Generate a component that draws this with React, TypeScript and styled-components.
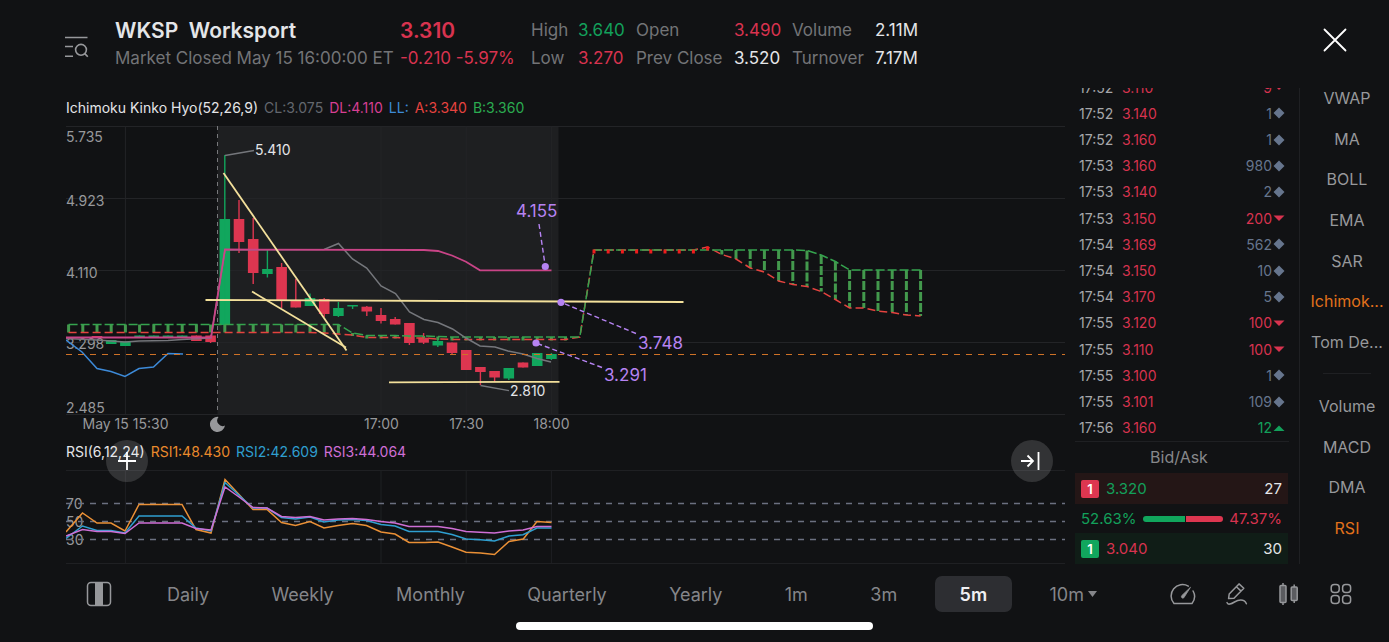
import React from "react";
import styled, { createGlobalStyle } from "styled-components";

const color = {
  bg: "#111214",
  text: "#e4e5e8",
  muted: "#737477",
  axis: "#97989b",
  red: "#d8334f",
  green: "#13a05b",
  slate: "#66758d",
  orange: "#e2711b",
  line: "#1f2023",
  purple: "#b683f2",
  yellow: "#f3e09b",
};

const GlobalStyle = createGlobalStyle`
  * { box-sizing: border-box; }
  body {
    margin: 0;
    background: ${color.bg};
    color: ${color.text};
    font-family: Inter, "Liberation Sans", sans-serif;
  }
  button {
    font: inherit;
    color: inherit;
    background: none;
    border: 0;
    padding: 0;
    cursor: pointer;
  }
  svg { display: block; }
`;

const Page = styled.div`
  min-height: 100vh;
  display: grid;
  grid-template-rows: 88px auto 1fr;
`;

/* Header */

const Header = styled.header`
  display: flex;
  align-items: flex-start;
  padding: 16px 42px 0 64px;
`;

const IconButton = styled.button<{ $top?: number }>`
  display: grid;
  place-items: center;
  margin-top: ${(p) => p.$top ?? 0}px;
`;

const Identity = styled.div`
  display: grid;
  grid-template-columns: 277px 122px;
  grid-template-rows: 28px 28px;
  column-gap: 8px;
  align-items: center;
  margin-left: 25px;
  white-space: pre;
`;

const Title = styled.h1`
  margin: 0;
  font-size: 21px;
  font-weight: 600;
`;

const Price = styled.strong`
  font-size: 21px;
  font-weight: 600;
  color: ${color.red};
`;

const Sub = styled.span<{ $color?: string }>`
  font-size: 17px;
  color: ${(p) => p.$color ?? color.muted};
`;

const Stats = styled.dl`
  display: grid;
  grid-template-columns: 47px 58px 98px 58px 83px auto;
  grid-template-rows: 28px 28px;
  align-items: center;
  margin: 0 auto 0 9px;
  font-size: 17px;
  white-space: nowrap;
`;

const Stat = styled.div`
  display: contents;
`;

const StatName = styled.dt`
  color: ${color.muted};
`;

const StatValue = styled.dd<{ $color?: string }>`
  margin: 0;
  color: ${(p) => p.$color ?? color.text};
`;

/* Body */

const Body = styled.main`
  display: grid;
  grid-template-columns: minmax(0, 1fr) 214px 90px;
  column-gap: 10px;
  height: 476px;
  padding-left: 66px;
`;

const Charts = styled.section`
  display: flex;
  flex-direction: column;
  min-width: 0;
`;

const Legend = styled.div<{ $height: number }>`
  display: flex;
  align-items: center;
  gap: 6px;
  height: ${(p) => p.$height}px;
  font-size: 14px;
  white-space: nowrap;
`;

const Tint = styled.span<{ $color?: string }>`
  color: ${(p) => p.$color ?? color.text};
`;

const Plot = styled.svg<{ $height: number }>`
  width: 100%;
  height: ${(p) => p.$height}px;
  font-size: 14px;
`;

const RsiPanel = styled.section`
  position: relative;
`;

const RoundButton = styled.button<{ $side: "left" | "right" }>`
  position: absolute;
  top: 2px;
  ${(p) => (p.$side === "left" ? "left: 40px;" : "right: 12px;")}
  width: 42px;
  height: 42px;
  border-radius: 50%;
  background: rgba(255, 255, 255, 0.14);
  display: grid;
  place-items: center;
`;

/* Trades */

const Trades = styled.section`
  display: flex;
  flex-direction: column;
  min-width: 0;
  font-size: 14px;
`;

const Tape = styled.div`
  height: 354px;
  overflow: hidden;
  display: flex;
  flex-direction: column;
  justify-content: flex-end;
  border-bottom: 1px solid ${color.line};
`;

const TapeTable = styled.table`
  flex: none;
  width: 100%;
  height: 367px;
  border-collapse: collapse;

  td { padding: 0; }
`;

const TimeCell = styled.td`
  width: 47px;
  color: #a6a7aa;
  && { padding-left: 4px; }
`;

const PriceCell = styled.td`
  color: ${color.red};
`;

const SizeCell = styled.td<{ $color: string }>`
  color: ${(p) => p.$color};
  && { padding-right: 4px; }
`;

const Size = styled.span`
  display: flex;
  align-items: center;
  justify-content: flex-end;
  gap: 1px;
`;

const BookTitle = styled.h2`
  margin: 0;
  padding-right: 6px;
  height: 31px;
  line-height: 31px;
  text-align: center;
  font-size: 16px;
  font-weight: 400;
  color: #87888b;
`;

const Quote = styled.div<{ $bg: string }>`
  display: flex;
  align-items: center;
  gap: 7px;
  height: 31px;
  margin-right: 1px;
  padding: 0 6px;
  background: ${(p) => p.$bg};
  font-size: 15px;
`;

const Level = styled.span<{ $bg: string }>`
  width: 18px;
  height: 18px;
  line-height: 18px;
  border-radius: 2px;
  text-align: center;
  font-size: 13px;
  font-weight: 600;
  color: #fff;
  background: ${(p) => p.$bg};
`;

const Amount = styled.span`
  margin-left: auto;
`;

const Ratio = styled.div`
  display: flex;
  align-items: center;
  justify-content: space-between;
  gap: 6px;
  height: 29px;
  padding: 0 7px 0 6px;
  font-size: 15px;
`;

const Meter = styled.div`
  flex: 1;
  display: flex;
  gap: 1px;
  height: 6px;
  border-radius: 3px;
  overflow: hidden;
`;

const Share = styled.span<{ $bg: string }>`
  background: ${(p) => p.$bg};
`;

/* Indicators */

const Indicators = styled.nav`
  border-left: 1px solid ${color.line};
  padding-left: 5px;
`;

const IndicatorGroup = styled.div<{ $height: number }>`
  display: flex;
  flex-direction: column;
  height: ${(p) => p.$height}px;
`;

const FirstGroup = styled(IndicatorGroup)`
  margin-top: -10px;
`;

const Indicator = styled.button<{ $active?: boolean }>`
  flex: 1;
  font-size: 16px;
  color: ${(p) => (p.$active ? color.orange : "#97989b")};
`;

const Divider = styled.hr`
  width: 48px;
  margin: 11px auto 12px;
  border: 0;
  border-top: 1px solid ${color.line};
`;

/* Footer */

const Footer = styled.footer`
  display: grid;
  grid-template-rows: 60px 8px;
  color: #85868a;
`;

const Toolbar = styled.div`
  display: flex;
  align-items: center;
  padding: 0 36px 0 86px;
`;

const Ranges = styled.div`
  flex: 1;
  display: flex;
  justify-content: space-between;
  margin: 0 48px 0 30px;
`;

const Range = styled.button<{ $active?: boolean }>`
  display: flex;
  align-items: center;
  gap: 4px;
  height: 36px;
  padding: 0 25px;
  border-radius: 7px;
  font-size: 18px;
  font-weight: ${(p) => (p.$active ? 600 : 400)};
  color: ${(p) => (p.$active ? "#f0f0f2" : "inherit")};
  background: ${(p) => (p.$active ? "#2d2e32" : "none")};
`;

const Tools = styled.div`
  display: flex;
  align-items: center;
  gap: 29px;
`;

const HomeBar = styled.div`
  width: 357px;
  height: 8px;
  margin: -2px auto 0;
  border-radius: 4px;
  background: #fff;
`;

/* Chart data: plot coordinates, with bars 14.2 units apart */

const STEP = 14.2;
const barX = (i: number) => 158.8 + STEP * i;

type Candle = [bar: number, up: boolean, top: number, bottom: number, high: number, low: number];

const candles: Candle[] = [
  [-9, false, 210, 212, 210, 212],
  [-8, true, 214, 218, 214, 218],
  [-7, true, 215.5, 220, 215.5, 220],
  [-6, true, 209.5, 211, 209.5, 211],
  [-5, true, 209.5, 211, 209.5, 211],
  [-4, true, 209.5, 211, 209.5, 211],
  [-3, true, 209.5, 211, 209.5, 211],
  [-2, false, 209.5, 215, 209.5, 215],
  [-1, false, 209.5, 216, 209, 217],
  [0, true, 93, 199, 29, 199],
  [1, false, 93, 116, 74, 127],
  [2, false, 113, 147, 92, 158],
  [3, true, 143, 148, 123.5, 151.5],
  [4, false, 141, 174, 137, 182],
  [5, false, 174, 181.5, 153, 181.5],
  [6, true, 172, 180, 167.5, 180],
  [7, false, 173, 188, 172, 191],
  [8, true, 182, 190, 176, 191],
  [9, true, 179, 180.5, 179, 183],
  [10, false, 180.7, 185.5, 180, 190],
  [11, false, 189, 195, 182, 197.5],
  [12, false, 193, 198.5, 191, 198.5],
  [13, false, 197, 217, 197, 219],
  [14, false, 211.7, 216.7, 207, 218],
  [15, true, 215, 219.5, 214, 221],
  [16, false, 216.5, 227, 216.5, 228],
  [17, false, 224, 244, 224, 244],
  [18, false, 241, 246, 241, 259],
  [19, false, 245, 251.5, 245, 256],
  [20, true, 242, 252.5, 242, 254],
  [21, false, 236.5, 241.5, 236.5, 241.5],
  [22, true, 227, 240, 227, 240],
  [23, true, 228, 233, 227, 234],
];

/* Cloud spans per bar: [green edge, red edge] */
const cloud: [number, number][] = [
  ...Array.from({ length: 18 }, (): [number, number] => [198.5, 206.5]),
  [198.5, 207], [198.5, 208], [207, 209], [209.5, 211.5], [209.5, 211.5], [209.5, 211.5], [210, 212],
  [210, 212], [210.5, 213], [211, 213.5],
  ...Array.from({ length: 8 }, (): [number, number] => [211, 213.5]),
  [211, 211],
  ...Array.from({ length: 8 }, (): [number, number] => [124, 124]),
  [124, 121], [124, 128.5], [124, 133], [124, 142], [124, 146], [124, 155], [124, 158.5],
  [124.5, 160.5], [129, 165.5], [135.5, 173.5], [144, 182], [144, 182], [144, 185], [144, 186.5],
  [144, 189], [144, 190],
];
const cloudBar = (n: number) => n - 11;
const edge = (side: 0 | 1) =>
  cloud.map((c, n) => `${Math.max(0, barX(cloudBar(n))).toFixed(1)},${c[side]}`).join(" ");

const series = {
  base: "0,212.5 31,214 59,216 73,215 102,214.5 116,213.5 145,212 159,124 258,123.5 272.5,117.5 286.5,133 300.7,142 315,160 329.5,167.5 343.5,186 358,193.5 372,196.5 386.5,203 400,212 414,220 429,221 442,225 457,228 471,232.5 485,236",
  conversion: "0,211.5 145,211.5 159,123.5 358,124 372,125 386,129.5 400,135.7 414,144.3 485.5,144.3",
  lagging: "0,214 16,226 31,242.5 45,245.5 59,250.5 73,242.5 87.5,241 102,227.5 117,228",
  rsi1: "0,68 16.5,49 31,59 45,59 59,67 73,40.5 116,40.5 130,65.5 145,69 159,15.5 187,45.5 201,45.5 215.5,58.5 229.5,61.5 244,57.5 258,64 272,61.5 286.5,59.5 300.5,61.5 315,68 329,70 343,78.5 359,78.5 372,78 386,83 400,88.3 414.5,89 428.5,90.5 443,77.5 457.3,75 471,57.5 485.5,58.5",
  rsi2: "0,74.5 16.5,62 31,66.5 45,66.5 59,69 73,52 116,52 130,64 145,67 159,18.5 187,44 201,44 215.5,53.5 229.5,55 244,53 258,58 272,56 286.5,55.5 300.5,56.5 315,60.5 329,62 343,67.5 372,67.5 386,70.5 400,75 414.5,75.7 428.5,77 443,72 457,70.7 471,64 485.5,64",
  rsi3: "0,72 16.5,65.5 31,67.5 45,67.5 59,69.5 73,59 116,59 130,64.5 145,66 159,23 173,33 187,43.5 201,44 215.5,52.5 229.5,53.5 244,52.5 258,56 272,55 286.5,54.5 300.5,55.5 315,57.5 329,59 343,62.5 372,62.5 386,64.5 400,67.5 414,68.3 428.5,69 443,67 457,66 471,62.5 485.5,62.5",
};

const gridX = [-7, 11, 17, 23].map(barX);

const priceTicks: [string, number][] = [
  ["5.735", 16], ["4.923", 80], ["4.110", 152], ["3.298", 223], ["2.485", 287],
];

const timeTicks: [string, number][] = [
  ["May 15 15:30", 59.5], ["17:00", 315.5], ["17:30", 400.5], ["18:00", 485.5],
];

const callouts: { label: string; x: number; y: number; dot: [number, number]; from: [number, number] }[] = [
  { label: "4.155", x: 450, y: 91, dot: [479.3, 140.5], from: [473, 98] },
  { label: "3.748", x: 572, y: 223, dot: [495, 176.3], from: [570, 207.5] },
  { label: "3.291", x: 538, y: 255, dot: [470, 217], from: [536, 241.5] },
];

const trendLines: [number, number, number, number][] = [
  [157.5, 47, 280.5, 224.5],
  [186, 165.5, 280, 221.5],
  [139.5, 174, 617.5, 176],
  [323, 256.3, 493.5, 255.8],
];

function PriceChart() {
  return (
    <Plot $height={312} role="img" aria-label="Five minute price chart">
      <rect x="151.5" y="0" width="341" height="288.5" fill="#1e1f21" />
      <g stroke="#232427">
        {[0.5, 72.5, 144.5, 216.5, 288.5].map((y) => (
          <line key={y} x1="0" x2="100%" y1={y} y2={y} />
        ))}
        {gridX.map((x) => (
          <line key={x} x1={x} x2={x} y1="0" y2="288" />
        ))}
      </g>
      <line x1="151.5" x2="151.5" y1="0" y2="288" stroke="#77787b" strokeDasharray="4 4" />

      {candles.map(([i, up, top, bottom, high, low]) => (
        <g key={i} fill={up ? "#11a65d" : "#dd3650"}>
          <rect x={barX(i) - 5.3} y={top} width="10.6" height={bottom - top} />
          <rect x={barX(i) - 0.7} y={high} width="1.4" height={low - high} />
        </g>
      ))}

      <g fill={color.axis}>
        {priceTicks.map(([t, y]) => (
          <text key={t} x="0" y={y}>{t}</text>
        ))}
        {timeTicks.map(([t, x]) => (
          <text key={t} x={x} y="303" textAnchor="middle">{t}</text>
        ))}
      </g>
      <path d="M152.5 290.9A7.6 7.6 0 1 0 159 299.6A5.6 5.6 0 0 1 152.5 290.9z" fill="#97989b" />

      <g fill="none" strokeWidth="1.5">
        {cloud.map(([a, b], n) =>
          b - a > 1 ? (
            <line
              key={n}
              x1={barX(cloudBar(n))}
              x2={barX(cloudBar(n))}
              y1={a}
              y2={b + (b - a < 4 ? 1 : 0)}
              stroke="#43994d"
              strokeWidth="3"
              strokeDasharray="9 2"
            />
          ) : null,
        )}
        <polyline points={edge(1)} stroke="#e5433f" strokeDasharray="8 4" />
        <polyline points={edge(0)} stroke="#35a34e" strokeDasharray="9 3" />
        {Array.from({ length: 9 }, (_, k) => (
          <line
            key={k}
            x1={barX(26 + k)}
            x2={barX(26 + k)}
            y1={k === 8 ? 120.5 : 123.5}
            y2={k === 8 ? 124.5 : 127.5}
            stroke="#ee1d1d"
            strokeWidth="3"
          />
        ))}
        <polyline points={series.base} stroke="#75777c" />
        <polyline points={series.conversion} stroke="#c94487" strokeWidth="1.8" />
        <polyline points={series.lagging} stroke="#3d8ad8" />
      </g>
      <line x1="0" x2="100%" y1="228.5" y2="228.5" stroke="#cf7227" strokeDasharray="6 6" />

      <g stroke={color.yellow} strokeWidth="1.8">
        {trendLines.map(([x1, y1, x2, y2]) => (
          <line key={x1} x1={x1} y1={y1} x2={x2} y2={y2} />
        ))}
      </g>

      <g fill="none" stroke="#75777c" strokeWidth="1.3">
        <path d="M159 29.5 L188 24.5" />
        <path d="M414.5 259.5 L443 264.7" />
      </g>
      <g fill={color.text}>
        <text x="189" y="29">5.410</text>
        <text x="444" y="270">2.810</text>
      </g>

      {callouts.map(({ label, x, y, dot, from }) => (
        <g key={label} fill={color.purple}>
          <line
            x1={from[0]}
            y1={from[1]}
            x2={dot[0]}
            y2={dot[1]}
            stroke={color.purple}
            strokeWidth="1.4"
            strokeDasharray="5 3"
          />
          <circle cx={dot[0]} cy={dot[1]} r="3.6" />
          <text x={x} y={y} fontSize="17">{label}</text>
        </g>
      ))}
    </Plot>
  );
}

function RsiChart() {
  return (
    <Plot $height={100} role="img" aria-label="Relative strength index">
      <g stroke={color.line}>
        <line x1="0" x2="100%" y1="6.5" y2="6.5" />
        <line x1="0" x2="100%" y1="99.5" y2="99.5" />
        {gridX.map((x) => (
          <line key={x} x1={x} x2={x} y1="6" y2="99" />
        ))}
      </g>
      <g fill={color.axis}>
        <text x="0" y="45">70</text>
        <text x="0" y="63">50</text>
        <text x="0" y="81">30</text>
      </g>
      <g stroke="#6b7080" strokeWidth="1.3" strokeDasharray="6 6">
        {[39.5, 57.5, 75.5].map((y) => (
          <line key={y} x1="0" x2="100%" y1={y} y2={y} />
        ))}
      </g>
      <g fill="none" strokeWidth="1.5">
        <polyline points={series.rsi1} stroke="#ea9036" />
        <polyline points={series.rsi2} stroke="#2f9fd0" />
        <polyline points={series.rsi3} stroke="#cf6fd6" />
      </g>
    </Plot>
  );
}

type Mark = "even" | "down" | "up";
const markColor = { even: color.slate, down: color.red, up: color.green };
const markPath = {
  even: "M6 0.5 L11.5 6 L6 11.5 L0.5 6z",
  down: "M0.5 3.5 H11.5 L6 9z",
  up: "M0.5 9 H11.5 L6 3.5z",
};

const trades: [string, string, string, Mark][] = [
  ["17:52", "3.110", "9", "down"],
  ["17:52", "3.140", "1", "even"],
  ["17:52", "3.160", "1", "even"],
  ["17:53", "3.160", "980", "even"],
  ["17:53", "3.140", "2", "even"],
  ["17:53", "3.150", "200", "down"],
  ["17:54", "3.169", "562", "even"],
  ["17:54", "3.150", "10", "even"],
  ["17:54", "3.170", "5", "even"],
  ["17:55", "3.120", "100", "down"],
  ["17:55", "3.110", "100", "down"],
  ["17:55", "3.100", "1", "even"],
  ["17:55", "3.101", "109", "even"],
  ["17:56", "3.160", "12", "up"],
];

const stats: [string, string, string?][] = [
  ["High", "3.640", color.green],
  ["Open", "3.490", color.red],
  ["Volume", "2.11M"],
  ["Low", "3.270", color.red],
  ["Prev Close", "3.520"],
  ["Turnover", "7.17M"],
];

const ranges = ["Daily", "Weekly", "Monthly", "Quarterly", "Yearly", "1m", "3m", "5m", "10m"];

export default function App() {
  return (
    <Page>
      <GlobalStyle />
      <Header>
        <IconButton $top={20} aria-label="Search watchlist">
          <svg width="26" height="24" viewBox="0 0 26 24" fill="none" stroke="#97989b" strokeWidth="1.6">
            <path d="M1 1.5H23.5M1 10.5H9M1 20.3H9" />
            <circle cx="17" cy="13.8" r="5.4" />
            <path d="M20.8 17.6 L23.8 20.8" />
          </svg>
        </IconButton>
        <Identity>
          <Title>WKSP  Worksport</Title>
          <Price>3.310</Price>
          <Sub>Market Closed May 15 16:00:00 ET</Sub>
          <Sub $color={color.red}>-0.210 -5.97%</Sub>
        </Identity>
        <Stats>
          {stats.map(([name, value, tone]) => (
            <Stat key={name}>
              <StatName>{name}</StatName>
              <StatValue $color={tone}>{value}</StatValue>
            </Stat>
          ))}
        </Stats>
        <IconButton $top={12} aria-label="Close">
          <svg width="24" height="24" viewBox="0 0 24 24" stroke="#fff" strokeWidth="1.8" strokeLinecap="round">
            <path d="M1.5 1.5 L22.5 22.5 M22.5 1.5 L1.5 22.5" />
          </svg>
        </IconButton>
      </Header>

      <Body>
        <Charts>
          <Legend $height={38}>
            <Tint>Ichimoku Kinko Hyo(52,26,9)</Tint>
            <Tint $color="#63676e">CL:3.075</Tint>
            <Tint $color="#d73f92">DL:4.110</Tint>
            <Tint $color="#3d8ad8">LL:</Tint>
            <Tint $color="#e5433f">A:3.340</Tint>
            <Tint $color="#2bab50">B:3.360</Tint>
          </Legend>
          <PriceChart />
          <RsiPanel>
            <Legend $height={26}>
              <Tint>RSI(6,12,24)</Tint>
              <Tint $color="#ea8a2c">RSI1:48.430</Tint>
              <Tint $color="#2f9fd0">RSI2:42.609</Tint>
              <Tint $color="#cf6fd6">RSI3:44.064</Tint>
            </Legend>
            <RsiChart />
            <RoundButton $side="left" aria-label="Add indicator">
              <svg width="20" height="20" viewBox="0 0 20 20" stroke="#fff" strokeWidth="1.8">
                <path d="M10 1V19M1 10H19" />
              </svg>
            </RoundButton>
            <RoundButton $side="right" aria-label="Jump to latest">
              <svg width="22" height="20" viewBox="0 0 22 20" fill="none" stroke="#fff" strokeWidth="1.8">
                <path d="M0 10H12M6.5 4.5 L12 10 L6.5 15.5M17.5 1V19" />
              </svg>
            </RoundButton>
          </RsiPanel>
        </Charts>

        <Trades>
          <Tape>
            <TapeTable>
              <tbody>
                {trades.map(([time, price, size, mark], n) => (
                  <tr key={n}>
                    <TimeCell>{time}</TimeCell>
                    <PriceCell>{price}</PriceCell>
                    <SizeCell $color={markColor[mark]}>
                      <Size>
                        {size}
                        <svg width="12" height="12" viewBox="0 0 12 12" fill="currentColor">
                          <path d={markPath[mark]} />
                        </svg>
                      </Size>
                    </SizeCell>
                  </tr>
                ))}
              </tbody>
            </TapeTable>
          </Tape>
          <BookTitle>Bid/Ask</BookTitle>
          <Quote $bg="#241616">
            <Level $bg="#dd3650">1</Level>
            <Tint $color={color.green}>3.320</Tint>
            <Amount>27</Amount>
          </Quote>
          <Ratio>
            <Tint $color={color.green}>52.63%</Tint>
            <Meter>
              <Share $bg="#11a65d" style={{ flex: 52.63 }} />
              <Share $bg="#dd3650" style={{ flex: 47.37 }} />
            </Meter>
            <Tint $color={color.red}>47.37%</Tint>
          </Ratio>
          <Quote $bg="#101d17">
            <Level $bg="#11a65d">1</Level>
            <Tint $color={color.red}>3.040</Tint>
            <Amount>30</Amount>
          </Quote>
        </Trades>

        <Indicators aria-label="Indicators">
          <FirstGroup $height={284}>
            {["VWAP", "MA", "BOLL", "EMA", "SAR", "Ichimok...", "Tom De..."].map((name) => (
              <Indicator key={name} $active={name === "Ichimok..."}>{name}</Indicator>
            ))}
          </FirstGroup>
          <Divider />
          <IndicatorGroup $height={162}>
            {["Volume", "MACD", "DMA", "RSI"].map((name) => (
              <Indicator key={name} $active={name === "RSI"}>{name}</Indicator>
            ))}
          </IndicatorGroup>
        </Indicators>
      </Body>

      <Footer>
        <Toolbar>
          <IconButton aria-label="Toggle side panel">
            <svg width="26" height="26" viewBox="0 0 26 26" fill="none" stroke="#97989b" strokeWidth="1.5">
              <rect x="1.5" y="1.5" width="23" height="23" rx="3.5" />
              <rect x="9" y="1.5" width="8" height="23" fill="#97989b" stroke="none" />
            </svg>
          </IconButton>
          <Ranges>
            {ranges.map((name) => (
              <Range key={name} $active={name === "5m"}>
                {name}
                {name === "10m" && (
                  <svg width="9" height="6" viewBox="0 0 9 6" fill="currentColor">
                    <path d="M0 0H9L4.5 6z" />
                  </svg>
                )}
              </Range>
            ))}
          </Ranges>
          <Tools>
            <IconButton aria-label="Gauge">
              <svg width="26" height="24" viewBox="0 0 26 24" fill="none" stroke="#97989b" strokeWidth="1.5" strokeLinecap="round" strokeLinejoin="round">
                <path d="M18.3 4.1A11.4 11.4 0 0 0 4 21.5H22A11.4 11.4 0 0 0 23.1 9" />
                <path d="M20.3 5.6 L13.8 15.8 A1.5 1.5 0 0 1 11.7 13.7z" fill="#97989b" strokeWidth="0.8" />
              </svg>
            </IconButton>
            <IconButton aria-label="Draw">
              <svg width="24" height="24" viewBox="0 0 24 24" fill="none" stroke="#97989b" strokeWidth="1.5" strokeLinecap="round" strokeLinejoin="round">
                <path d="M3.6 16.6 L4.2 12 L14 1.9 L18.8 6.3 L9 16.2z M11.4 4.7 L16.1 9.1" />
                <path d="M2 20.6 C2.8 23.4 6.5 21.8 9.5 20 C13 17.9 19 16.4 21.4 21.8" />
              </svg>
            </IconButton>
            <IconButton aria-label="Chart style">
              <svg width="22" height="24" viewBox="0 0 22 24" fill="#5b5c60" stroke="#97989b" strokeWidth="1.5">
                <path d="M5 1V23M16.2 2.5V21" />
                <rect x="2" y="3.5" width="6" height="17" rx="1" />
                <rect x="13.2" y="5" width="6" height="13.5" rx="1" />
              </svg>
            </IconButton>
            <IconButton aria-label="More tools">
              <svg width="24" height="24" viewBox="0 0 24 24" fill="none" stroke="#97989b" strokeWidth="1.5">
                <rect x="2.2" y="2.5" width="8" height="8" rx="3" />
                <rect x="13.6" y="2.5" width="8" height="8" rx="3" />
                <rect x="2.2" y="13.5" width="8" height="8" rx="3" />
                <rect x="13.6" y="13.5" width="8" height="8" rx="3" />
              </svg>
            </IconButton>
          </Tools>
        </Toolbar>
        <HomeBar />
      </Footer>
    </Page>
  );
}
